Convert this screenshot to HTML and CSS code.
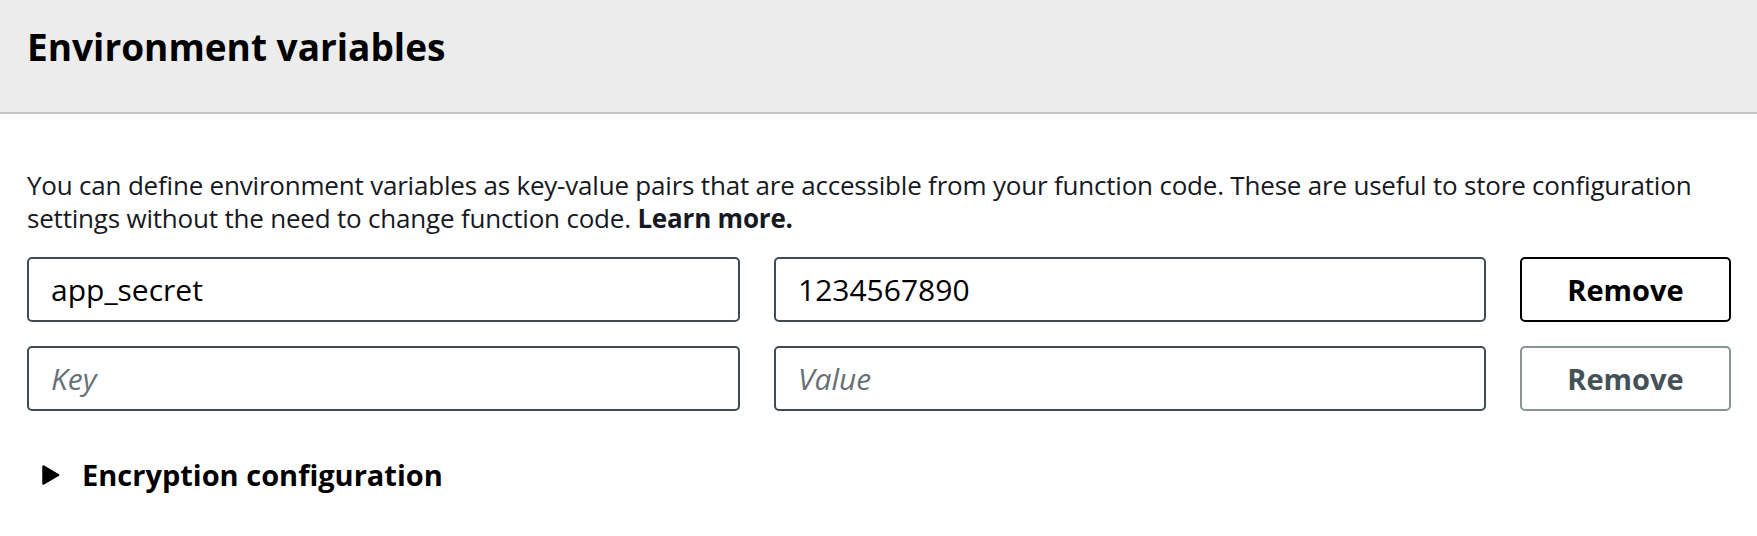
FILE: index.html
```html
<!DOCTYPE html>
<html lang="en">
<head>
<meta charset="utf-8">
<title>Environment variables</title>
<link rel="stylesheet" href="styles.css">
</head>
<body>
<section class="panel">
  <header class="panel-header">
    <h2 class="panel-title">Environment variables</h2>
  </header>
  <div class="panel-body">
    <p class="desc">You can define environment variables as key-value pairs that are accessible from your function code. These are useful to store configuration settings without the need to change function code. <a class="learn" href="#">Learn more.</a></p>
    <div class="env-row env-row-first">
      <input class="field" type="text" value="app_secret" aria-label="Key">
      <input class="field" type="text" value="1234567890" aria-label="Value">
      <button class="btn btn-active" type="button">Remove</button>
    </div>
    <div class="env-row">
      <input class="field" type="text" placeholder="Key" aria-label="Key">
      <input class="field" type="text" placeholder="Value" aria-label="Value">
      <button class="btn btn-disabled" type="button">Remove</button>
    </div>
    <div class="expander">
      <svg class="caret" width="20" height="22" viewBox="0 0 20 22" aria-hidden="true"><path d="M2.5 2.5 L17 11 L2.5 19.5 Z" fill="#000" stroke="#000" stroke-width="2.5" stroke-linejoin="round"/></svg>
      <span class="expander-label">Encryption configuration</span>
    </div>
  </div>
</section>
</body>
</html>
```
FILE: styles.css
```css
* { box-sizing: border-box; }
html, body { margin: 0; padding: 0; background: #fff; }
body {
  font-family: "Open Sans", "Noto Sans", sans-serif;
  color: #16191f;
}
.panel-header {
  height: 114px;
  background: #ececec;
  border-bottom: 2px solid #c4c7c9;
  padding: 25px 27px 0;
}
.panel-title {
  margin: 0;
  font-size: 37px;
  line-height: 44px;
  font-weight: 700;
  color: #000;
}
.panel-body {
  padding: 55px 26px 0 27px;
}
.desc {
  margin: 0;
  font-size: 26px;
  line-height: 33px;
  color: #16191f;
  letter-spacing: -0.2px;
}
.learn {
  color: #16191f;
  font-weight: 700;
  text-decoration: none;
}
.env-row {
  display: grid;
  grid-template-columns: 713px 712px 211px;
  column-gap: 34px;
  margin-top: 24px;
}
.env-row-first { margin-top: 22px; }
.field {
  height: 65px;
  border: 2px solid #3f4d52;
  border-radius: 5px;
  padding: 0 22px;
  font-family: inherit;
  font-size: 30px;
  color: #000;
  background: #fff;
  outline: none;
}
.field::placeholder {
  color: #687078;
  font-style: italic;
}
.btn {
  height: 65px;
  border-radius: 5px;
  background: #fff;
  font-family: inherit;
  font-size: 29px;
  font-weight: 700;
  padding: 0;
}
.btn-active {
  border: 2px solid #000;
  color: #000;
}
.btn-disabled {
  border: 2px solid #879596;
  color: #445257;
}
.expander {
  display: flex;
  align-items: center;
  margin-top: 46px;
  padding-left: 14px;
  height: 36px;
}
.caret { display: block; }
.expander-label {
  margin-left: 21px;
  font-size: 29px;
  line-height: 36px;
  font-weight: 700;
  color: #000;
}
```
